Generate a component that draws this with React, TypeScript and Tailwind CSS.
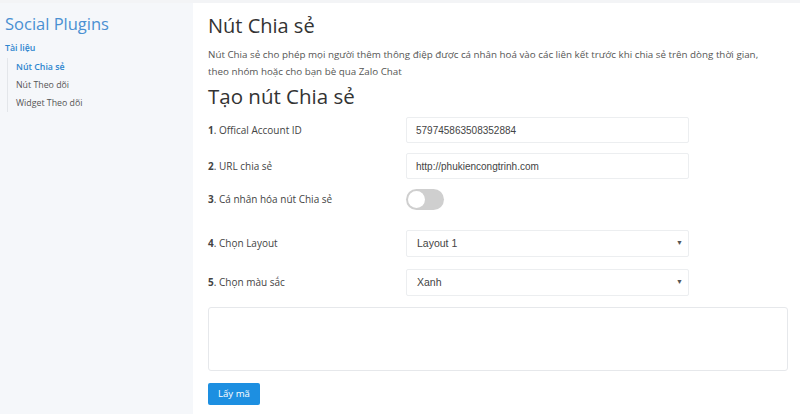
import { useState } from 'react'

const rows = [
  { n: '1', label: 'Offical Account ID' },
  { n: '2', label: 'URL chia sẻ' },
]

export default function App() {
  const [on, setOn] = useState(false)
  return (
    <div className="flex flex-col w-[800px] h-[414px] bg-white overflow-hidden font-['Open_Sans',sans-serif]">
      <div className="h-[3px] bg-[#f3f4f6]" />
      <div className="flex flex-1">
        {/* sidebar */}
        <aside className="w-[193px] bg-[#f5f7fa] pl-[5px] pt-[9px]">
          <h2 className="text-[16.5px] leading-[24px] text-[#4a90d2]">Social Plugins</h2>
          <div className="mt-[6px] text-[8.8px] font-semibold text-[#2e86cf]">Tài liệu</div>
          <ul className="mt-[3px] ml-[2px] border-l border-[#e3e6ea] pl-[8px] text-[8.8px] text-[#555]">
            <li className="h-[18px] leading-[18px] font-semibold text-[#2e86cf]">Nút Chia sẻ</li>
            <li className="h-[18px] leading-[18px]">Nút Theo dõi</li>
            <li className="h-[18px] leading-[18px]">Widget Theo dõi</li>
          </ul>
        </aside>

        {/* main */}
        <main className="flex-1 pl-[15px] pr-[12px] pt-[9px] text-[#333]">
          <h1 className="text-[20px] leading-[28px]">Nút Chia sẻ</h1>
          <p className="mt-[6px] text-[9.8px] leading-[17px] text-[#555]">
            Nút Chia sẻ cho phép mọi người thêm thông điệp được cá nhân hoá vào các liên kết trước khi chia sẻ trên dòng thời gian,
            <br />
            theo nhóm hoặc cho bạn bè qua Zalo Chat
          </p>
          <h2 className="mt-[2px] text-[20.5px] leading-[28px]">Tạo nút Chia sẻ</h2>

          <div className="mt-[7px] flex flex-col">
            {rows.map((r, i) => (
              <div key={r.n} className={`flex items-center ${i > 0 ? 'mt-[10px]' : ''}`}>
                <label className="w-[198px] text-[10px] text-[#444]">
                  <span className="font-bold">{r.n}</span>. {r.label}
                </label>
                <input
                  readOnly
                  value={i === 0 ? '579745863508352884' : 'http://phukiencongtrinh.com'}
                  className="w-[283px] h-[26px] border border-[#eceef0] rounded-[2px] px-[9px] text-[10px] text-[#444] font-['Liberation_Sans',Arial,sans-serif] outline-none"
                />
              </div>
            ))}

            <div className="flex items-center mt-[10px]">
              <label className="w-[198px] text-[10px] text-[#444]">
                <span className="font-bold">3</span>. Cá nhân hóa nút Chia sẻ
              </label>
              <button
                onClick={() => setOn(!on)}
                className={`relative w-[38px] h-[21px] rounded-full ${on ? 'bg-[#1d8fe1]' : 'bg-[#cfcfcf]'}`}
              >
                <span
                  className={`absolute top-[2px] w-[17px] h-[17px] rounded-full bg-white ${on ? 'left-[19px]' : 'left-[2px]'}`}
                />
              </button>
            </div>

            {[
              { n: '4', label: 'Chọn Layout', v: 'Layout 1', mt: 'mt-[20px]' },
              { n: '5', label: 'Chọn màu sắc', v: 'Xanh', mt: 'mt-[12px]' },
            ].map((s) => (
              <div key={s.n} className={`flex items-center ${s.mt}`}>
                <label className="w-[198px] text-[10px] text-[#444]">
                  <span className="font-bold">{s.n}</span>. {s.label}
                </label>
                <div className="flex items-center justify-between w-[283px] h-[27px] border border-[#eceef0] rounded-[2px] pl-[10px] pr-[5px] text-[10.5px] text-[#444] font-['Liberation_Sans',Arial,sans-serif]">
                  <span>{s.v}</span>
                  <span className="text-[7px] text-[#555]">▼</span>
                </div>
              </div>
            ))}
          </div>

          <textarea
            readOnly
            className="mt-[11px] block w-[580px] h-[64px] border border-[#e6e8eb] rounded-[3px] resize-none outline-none"
          />

          <button className="mt-[12px] h-[22px] px-[10px] rounded-[2px] bg-[#1d8fe1] text-white text-[9.6px]">
            Lấy mã
          </button>
        </main>
      </div>
    </div>
  )
}
